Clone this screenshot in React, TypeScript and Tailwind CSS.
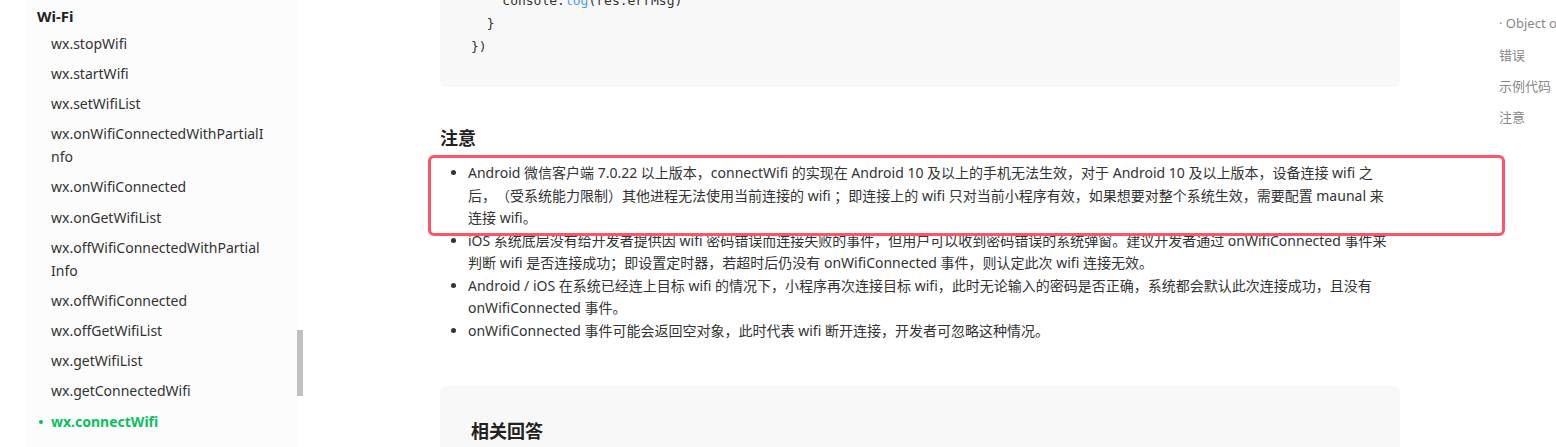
import { ReactNode } from "react";

const sans =
  "font-['Segoe_UI','Noto_Sans','Noto_Sans_CJK_SC',sans-serif] [font-variant-ligatures:none] [text-spacing-trim:space-all]";

const navItems = [
  "wx.stopWifi",
  "wx.startWifi",
  "wx.setWifiList",
  "wx.onWifiConnectedWithPartialInfo",
  "wx.onWifiConnected",
  "wx.onGetWifiList",
  "wx.offWifiConnectedWithPartialInfo",
  "wx.offWifiConnected",
  "wx.offGetWifiList",
  "wx.getWifiList",
  "wx.getConnectedWifi",
];

const tocItems = ["参数", "· Object object", "错误", "示例代码", "注意"];

function Sidebar() {
  return (
    <aside className="flex shrink-0">
      <div className="w-[27px]" />
      <div className="w-[270px] bg-[#fcfcfc] pt-[5px]">
        <div className="pl-[10px] text-[15px] font-bold leading-[23px] text-[#222]">Wi-Fi</div>
        <ul className="pl-[24px]">
          {navItems.map((item) => (
            <li
              key={item}
              className="w-[213px] break-all py-[3.6px] text-[14px] leading-[23px] text-[#333]"
            >
              {item}
            </li>
          ))}
          <li className="relative py-[3.6px] text-[14px] font-bold leading-[23px] text-[#07c160]">
            <span className="absolute left-[-12px] top-[14px] h-[4px] w-[4px] rounded-full bg-[#07c160]" />
            wx.connectWifi
          </li>
        </ul>
      </div>
      {/* scrollbar */}
      <div className="w-[6px] pt-[330px]">
        <div className="h-[66px] w-[6px] bg-[#c1c1c1]" />
      </div>
    </aside>
  );
}

function Code({ children }: { children: ReactNode }) {
  return <div className="whitespace-pre">{children}</div>;
}

function Notes() {
  return (
    <div className="relative">
      <ul className="list-disc pl-[28px] pr-[10px] text-[14px] leading-[22.5px] text-[#333] marker:text-[#333]">
        <li>
          Android 微信客户端 7.0.22 以上版本，connectWifi 的实现在 Android 10 及以上的手机无法生效，对于 Android 10
          及以上版本，设备连接 wifi 之后，（受系统能力限制）其他进程无法使用当前连接的 wifi ；即连接上的 wifi
          只对当前小程序有效，如果想要对整个系统生效，需要配置 maunal 来连接 wifi。
        </li>
        <li>
          iOS 系统底层没有给开发者提供因 wifi 密码错误而连接失败的事件，但用户可以收到密码错误的系统弹窗。建议开发者通过
          onWifiConnected 事件来判断 wifi 是否连接成功；即设置定时器，若超时后仍没有 onWifiConnected 事件，则认定此次 wifi
          连接无效。
        </li>
        <li>
          Android / iOS 在系统已经连上目标 wifi 的情况下，小程序再次连接目标 wifi，此时无论输入的密码是否正确，系统都会默认此次连接成功，且没有
          onWifiConnected 事件。
        </li>
        <li>onWifiConnected 事件可能会返回空对象，此时代表 wifi 断开连接，开发者可忽略这种情况。</li>
      </ul>
      {/* highlight annotation */}
      <div className="pointer-events-none absolute left-[-12px] top-[-7px] h-[81px] w-[1077px] rounded-[6px] border-[3px] border-[#ff5468]" />
    </div>
  );
}

export default function App() {
  return (
    <div className={`flex h-[447px] w-[1556px] overflow-hidden bg-white ${sans}`}>
      <Sidebar />

      <main className="ml-[137px] w-[960px] shrink-0">
        <div className="mt-[-34px] rounded-[6px] bg-[#f8f8f8] pb-[29px] pl-[31px] font-['Consolas','DejaVu_Sans_Mono',monospace] text-[13px] leading-[23px] text-[#333]">
          <Code>{"    fail (res) {"}</Code>
          <Code>
            {"    console."}
            <span className="text-[#4a9cf5]">log</span>
            {"(res.errMsg)"}
          </Code>
          <Code>{"  }"}</Code>
          <Code>{"})"}</Code>
        </div>

        <h2 className="mt-[39px] text-[18px] font-bold leading-[24px] text-[#222]">注意</h2>
        <div className="mt-[12px]">
          <Notes />
        </div>

        <section className="mt-[44px] h-[80px] rounded-[6px] bg-[#f8f8f8] px-[31px] pt-[33px]">
          <h2 className="text-[18px] font-bold leading-[24px] text-[#222]">相关回答</h2>
        </section>
      </main>

      <nav className="ml-[99px] mt-[-23px] shrink-0 whitespace-nowrap text-[13px] leading-[31.3px] text-[#888]">
        {tocItems.map((t) => (
          <div key={t}>{t}</div>
        ))}
      </nav>
    </div>
  );
}
